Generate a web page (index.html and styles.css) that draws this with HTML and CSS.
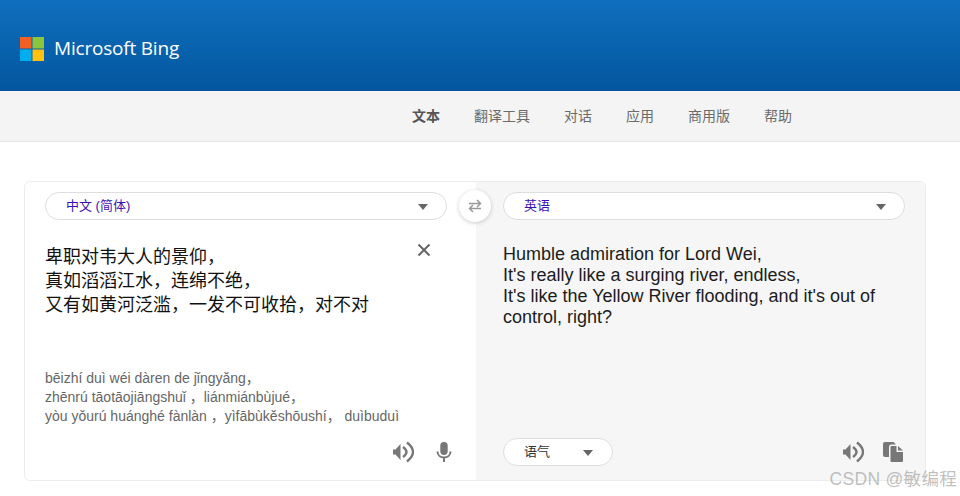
FILE: index.html
```html
<!DOCTYPE html>
<html lang="zh-CN">
<head>
    <meta charset="UTF-8">
    <meta name="viewport" content="width=device-width, initial-scale=1.0">
    <title>Microsoft Bing 翻译</title>
    <link rel="stylesheet" href="styles.css">
</head>
<body>
    <header class="top">
        <svg class="logo" width="24" height="24" viewBox="0 0 24 24">
            <rect width="11.5" height="11.5" fill="#f25f22"/>
            <rect x="12.5" width="11.5" height="11.5" fill="#8cc63f"/>
            <rect y="12.5" width="11.5" height="11.5" fill="#00aeef"/>
            <rect x="12.5" y="12.5" width="11.5" height="11.5" fill="#ffc20e"/>
        </svg>
        <span class="brand">Microsoft Bing</span>
    </header>

    <nav class="menu">
        <a class="active">文本</a>
        <a>翻译工具</a>
        <a>对话</a>
        <a>应用</a>
        <a>商用版</a>
        <a>帮助</a>
    </nav>

    <main class="card">
        <section class="pane from">
            <div class="lang">
                <span>中文 (简体)</span>
                <i class="caret"></i>
            </div>
            <div class="input-row">
                <div class="source">卑职对韦大人的景仰，<br>真如滔滔江水，连绵不绝，<br>又有如黄河泛滥，一发不可收拾，对不对</div>
                <svg class="clear" width="14" height="14" viewBox="0 0 14 14">
                    <path d="M1.5 1.5l11 11M12.5 1.5l-11 11" stroke="#666" stroke-width="2" fill="none"/>
                </svg>
            </div>
            <div class="pinyin">bēizhí duì wéi dàren de jǐngyǎng，<br>zhēnrú tāotāojiāngshuǐ <span class="tight">，</span> liánmiánbùjué，<br>yòu yǒurú huánghé fànlàn <span class="tight">，</span> yìfābùkěshōushí， duìbuduì</div>
            <div class="tools">
                <svg class="icon" width="22" height="22" viewBox="0 0 22 22">
                    <path d="M1 8.500v5h2.500L8.500 19V3L3.500 8.500z" fill="#777"/>
                    <path d="M11 6q7 5 0 10M15 1.500q12 9.500 0 19" stroke="#777" stroke-width="2.400" fill="none"/>
                </svg>
                <svg class="icon" width="22" height="22" viewBox="0 0 22 22">
                    <rect x="7.300" y="1" width="7.400" height="13" rx="3.700" fill="#777"/>
                    <path d="M4.500 10.500c0 8 13 8 13 0M11 16v5" stroke="#777" stroke-width="2" fill="none"/>
                </svg>
            </div>
        </section>

        <section class="pane to">
            <div class="lang">
                <span>英语</span>
                <i class="caret"></i>
            </div>
            <div class="result">Humble admiration for Lord Wei,<br>It's really like a surging river, endless,<br>It's like the Yellow River flooding, and it's out of control, right?</div>
            <div class="tools between">
                <div class="tone">
                    <span>语气</span>
                    <i class="caret"></i>
                </div>
                <div class="tool-group">
                    <svg class="icon" width="22" height="22" viewBox="0 0 22 22">
                        <path d="M1 8.500v5h2.500L8.500 19V3L3.500 8.500z" fill="#777"/>
                        <path d="M11 6q7 5 0 10M15 1.500q12 9.500 0 19" stroke="#777" stroke-width="2.400" fill="none"/>
                    </svg>
                    <svg class="icon" width="22" height="22" viewBox="0 0 22 22">
                        <path d="M3 1h8.500L14 3.500H9.500a2.500 2.500 0 0 0-2.500 2.500V16H3a2 2 0 0 1-2-2V3a2 2 0 0 1 2-2z" fill="#777"/>
                        <path d="M9.500 5h5v6h6.500v9a1 1 0 0 1-1 1H9.500a1 1 0 0 1-1-1V6a1 1 0 0 1 1-1zM16 5l5 4.500h-5z" fill="#777"/>
                    </svg>
                </div>
            </div>
        </section>

        <button class="swap" type="button">
            <svg width="16" height="16" viewBox="0 0 16 16">
                <path d="M2 5.500h11.500M10 2l3.500 3.500L10 9M14 10.500H2.500M6 7l-3.500 3.500L6 14" stroke="#999" stroke-width="1.500" fill="none"/>
            </svg>
        </button>
    </main>

    <div class="watermark">CSDN @敏编程</div>
</body>
</html>
```

FILE: styles.css
```css
* {
    box-sizing: border-box;
}
html, body {
    height: 496px;
    overflow: hidden;
}
body {
    margin: 0;
    background: #fff;
    font-family: "Liberation Sans", "Noto Sans CJK SC", sans-serif;
    color: #222;
}
.top {
    height: 91px;
    padding: 0 20px;
    display: flex;
    align-items: center;
    gap: 10px;
    background: linear-gradient(#0f6fbe, #03569e);
}
.logo {
    margin-top: 7px;
}
.brand {
    margin-top: 5px;
    color: #fff;
    font-family: "Open Sans", sans-serif;
    font-size: 19px;
    font-weight: 500;
    letter-spacing: -0.200px;
}
.menu {
    height: 51px;
    padding: 0 0 2px 412px;
    display: flex;
    align-items: center;
    gap: 34px;
    background: #f4f4f4;
    border-bottom: 1px solid #e5e5e5;
    font-size: 14px;
    color: #6b6b6b;
}
.menu .active {
    font-weight: bold;
    color: #555;
}
.card {
    position: relative;
    display: flex;
    width: 902px;
    height: 300px;
    margin: 39px 0 0 24px;
    border: 1px solid #ececec;
    border-radius: 6px;
}
.pane {
    display: flex;
    flex-direction: column;
}
.from {
    width: 451px;
    padding: 10px 29px 0 20px;
    background: #fff;
    border-radius: 6px 0 0 6px;
}
.to {
    width: 449px;
    padding: 10px 20px 0 27px;
    background: #f6f6f6;
    border-radius: 0 6px 6px 0;
}
.lang {
    height: 28px;
    flex: none;
    padding: 0 18px 0 20px;
    display: flex;
    align-items: center;
    justify-content: space-between;
    background: #fff;
    border: 1px solid #dedede;
    border-radius: 14px;
    font-size: 13px;
    color: #3a12b4;
}
.lang span, .tone span {
    margin-top: -3px;
}
.caret {
    width: 0;
    height: 0;
    margin-top: 2px;
    border-left: 5.500px solid transparent;
    border-right: 5.500px solid transparent;
    border-top: 6px solid #666;
}
.input-row {
    margin-top: 25px;
    height: 108px;
    display: flex;
    justify-content: space-between;
}
.source {
    font-size: 18px;
    line-height: 24px;
    color: #111;
}
.clear {
    margin: -2px 16px 0 0;
}
.pinyin {
    margin-top: 16px;
    font-size: 14px;
    line-height: 19px;
    color: #666;
}
.tight {
    letter-spacing: -4px;
}
.result {
    margin-top: 24px;
    height: 194px;
    font-size: 18px;
    line-height: 21px;
    color: #1c1c1c;
}
.tools {
    margin: 15px -8px 0 0;
    display: flex;
    justify-content: flex-end;
    gap: 19px;
}
.tools.between {
    margin: 0 1px 0 0;
    justify-content: space-between;
    align-items: center;
}
.tool-group {
    display: flex;
    gap: 18px;
}
.tone {
    width: 110px;
    height: 28px;
    padding: 0 19px 0 20px;
    display: flex;
    align-items: center;
    justify-content: space-between;
    background: #fff;
    border: 1px solid #dedede;
    border-radius: 14px;
    font-size: 13px;
    color: #333;
}
.swap {
    position: absolute;
    left: 434px;
    top: 8px;
    width: 32px;
    height: 32px;
    padding: 0;
    display: flex;
    align-items: center;
    justify-content: center;
    background: #fff;
    border: none;
    border-radius: 50%;
    box-shadow: 0 1px 4px rgba(0, 0, 0, 0.2);
}
.watermark {
    position: absolute;
    right: 3px;
    bottom: 6px;
    font-size: 17.500px;
    color: rgba(130, 130, 130, 0.5);
    letter-spacing: 0.300px;
}
```
